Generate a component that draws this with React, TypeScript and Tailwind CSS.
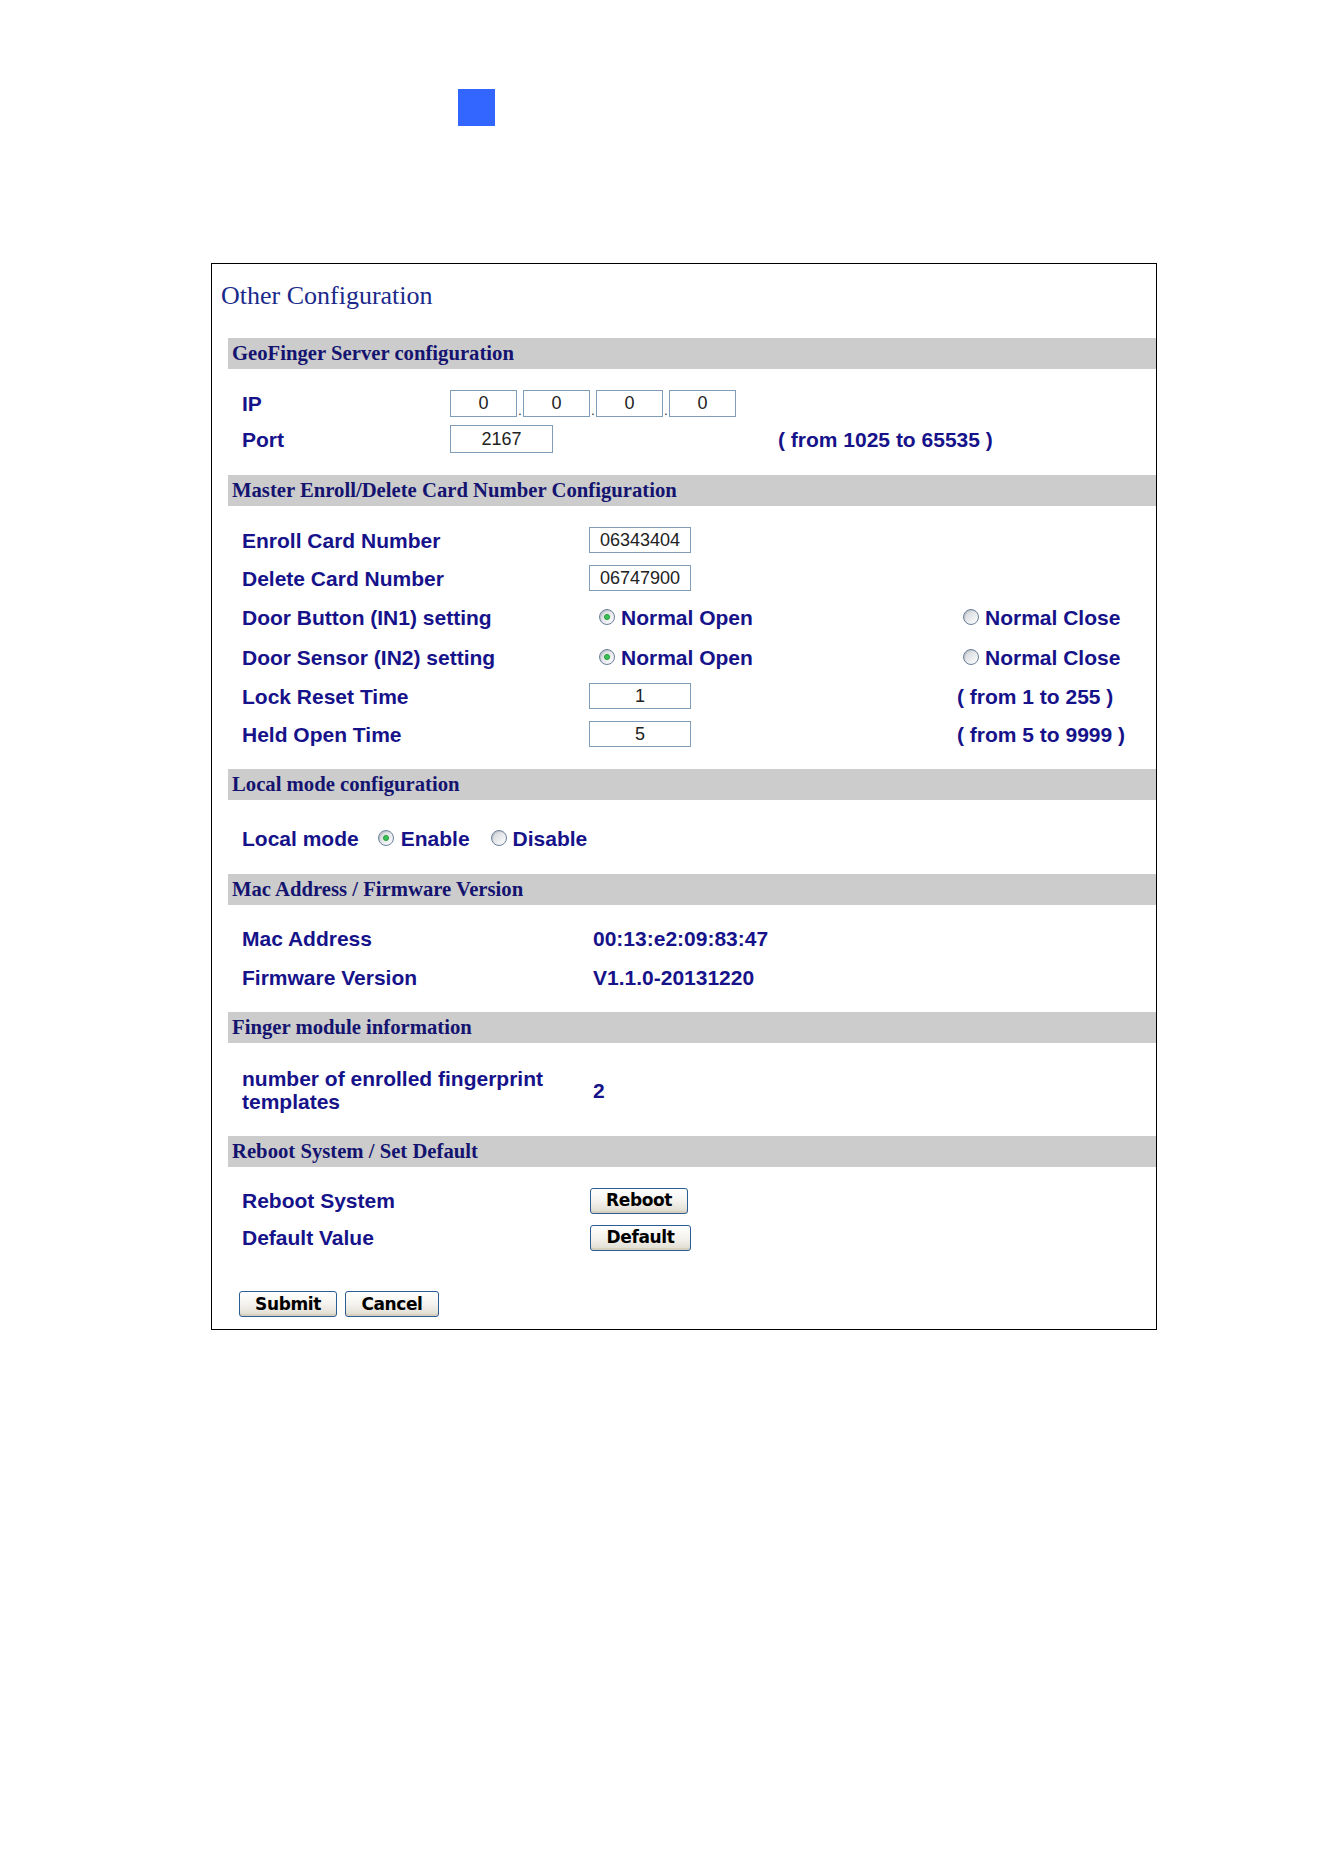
import type { ReactNode } from 'react'

const sans = "font-['Liberation_Sans',Arial,sans-serif]"
const label = "font-['Liberation_Sans',Arial,sans-serif] font-bold text-[21px] text-[#16128a] leading-none"

function SectionHeader({ title }: { title: string }) {
  return (
    <div className="h-[31px] bg-[#cccccc] flex items-center pl-[4px] font-['Liberation_Serif','Times_New_Roman',serif] font-bold text-[20.7px] text-[#141470] leading-none">
      {title}
    </div>
  )
}

function Field({ value, className }: { value: string; className: string }) {
  return (
    <input
      readOnly
      value={value}
      className={`${className} border border-[#7f9db9] bg-white text-center text-[18px] text-[#222] outline-none ${sans}`}
    />
  )
}

function Radio({ checked = false }: { checked?: boolean }) {
  return (
    <span className="inline-flex w-[16px] h-[16px] shrink-0 rounded-full border border-[#6b7f9c] bg-linear-to-br from-[#cfd3d8] to-[#ffffff] items-center justify-center shadow-[inset_1px_1px_1px_rgba(0,0,0,0.12)]">
      {checked && <span className="w-[6px] h-[6px] rounded-full bg-[#3cc257] border border-[#1f9a36]" />}
    </span>
  )
}

function Btn({ children, className }: { children: ReactNode; className: string }) {
  return (
    <button
      className={`${className} rounded-[3px] border border-[#2b5c94] bg-linear-to-b from-[#ffffff] via-[#f4f3ee] to-[#dedbcf] font-['DejaVu_Sans',Verdana,sans-serif] font-bold text-[17px] tracking-[-0.4px] text-black leading-none shadow-[inset_0_-2px_0_#d6d0bd]`}
    >
      {children}
    </button>
  )
}

export default function App() {
  return (
    <div className="bg-white min-h-[1872px] w-[1324px]">
      <div className="pt-[89px] pl-[458px]">
        <div className="w-[37px] h-[37px] bg-[#3366ff]" />
      </div>

      <div className="ml-[211px] mt-[137px] w-[946px] h-[1067px] border border-black pl-[16px]">
        <div className="pt-[15px] -ml-[7px] font-['Liberation_Serif','Times_New_Roman',serif] text-[26px] text-[#1a2a8a] leading-[34px]">
          Other Configuration
        </div>

        <div className="mt-[25px]">
          {/* GeoFinger server */}
          <SectionHeader title="GeoFinger Server configuration" />
          <div className="pl-[14px] pt-[16px] pb-[18px]">
            <div className="flex items-center h-[36px]">
              <div className={`${label} w-[208px]`}>IP</div>
              <div className="flex items-end">
                <Field value="0" className="w-[67px] h-[27px]" />
                <span className={`w-[6px] text-[12px] leading-none text-center text-black ${sans}`}>.</span>
                <Field value="0" className="w-[67px] h-[27px]" />
                <span className={`w-[6px] text-[12px] leading-none text-center text-black ${sans}`}>.</span>
                <Field value="0" className="w-[67px] h-[27px]" />
                <span className={`w-[6px] text-[12px] leading-none text-center text-black ${sans}`}>.</span>
                <Field value="0" className="w-[67px] h-[27px]" />
              </div>
            </div>
            <div className="flex items-center h-[36px]">
              <div className={`${label} w-[208px]`}>Port</div>
              <Field value="2167" className="w-[103px] h-[28px]" />
              <div className={`${label} ml-[225px]`}>( from 1025 to 65535 )</div>
            </div>
          </div>

          {/* Master card */}
          <SectionHeader title="Master Enroll/Delete Card Number Configuration" />
          <div className="pl-[14px] pt-[15px] pb-[16px]">
            <div className="flex items-center h-[38px]">
              <div className={`${label} w-[347px]`}>Enroll Card Number</div>
              <Field value="06343404" className="w-[102px] h-[26px]" />
            </div>
            <div className="flex items-center h-[38px]">
              <div className={`${label} w-[347px]`}>Delete Card Number</div>
              <Field value="06747900" className="w-[102px] h-[26px]" />
            </div>
            <div className="flex items-center h-[40px]">
              <div className={`${label} w-[347px]`}>Door Button (IN1) setting</div>
              <div className="w-[368px] flex items-center pl-[10px] gap-[6px]">
                <Radio checked />
                <span className={label}>Normal Open</span>
              </div>
              <div className="flex items-center pl-[6px] gap-[6px]">
                <Radio />
                <span className={label}>Normal Close</span>
              </div>
            </div>
            <div className="flex items-center h-[40px]">
              <div className={`${label} w-[347px]`}>Door Sensor (IN2) setting</div>
              <div className="w-[368px] flex items-center pl-[10px] gap-[6px]">
                <Radio checked />
                <span className={label}>Normal Open</span>
              </div>
              <div className="flex items-center pl-[6px] gap-[6px]">
                <Radio />
                <span className={label}>Normal Close</span>
              </div>
            </div>
            <div className="flex items-center h-[38px]">
              <div className={`${label} w-[347px]`}>Lock Reset Time</div>
              <div className="w-[368px]">
                <Field value="1" className="w-[102px] h-[26px]" />
              </div>
              <div className={label}>( from 1 to 255 )</div>
            </div>
            <div className="flex items-center h-[38px]">
              <div className={`${label} w-[347px]`}>Held Open Time</div>
              <div className="w-[368px]">
                <Field value="5" className="w-[102px] h-[26px]" />
              </div>
              <div className={label}>( from 5 to 9999 )</div>
            </div>
          </div>

          {/* Local mode */}
          <SectionHeader title="Local mode configuration" />
          <div className="pl-[14px] pt-[19px] pb-[17px]">
            <div className="flex items-center h-[38px]">
              <span className={label}>Local mode</span>
              <span className="ml-[19px] flex items-center gap-[7px]">
                <Radio checked />
                <span className={label}>Enable</span>
              </span>
              <span className="ml-[21px] flex items-center gap-[6px]">
                <Radio />
                <span className={label}>Disable</span>
              </span>
            </div>
          </div>

          {/* Mac / firmware */}
          <SectionHeader title="Mac Address / Firmware Version" />
          <div className="pl-[14px] pt-[14px] pb-[15px]">
            <div className="flex items-center h-[39px]">
              <div className={`${label} w-[351px]`}>Mac Address</div>
              <div className={label}>00:13:e2:09:83:47</div>
            </div>
            <div className="flex items-center h-[39px]">
              <div className={`${label} w-[351px]`}>Firmware Version</div>
              <div className={label}>V1.1.0-20131220</div>
            </div>
          </div>

          {/* Finger module */}
          <SectionHeader title="Finger module information" />
          <div className="pl-[14px] pt-[24px] pb-[23px]">
            <div className="flex items-center h-[46px]">
              <div className={`${label} w-[351px] !leading-[23px] pr-[12px]`}>number of enrolled fingerprint templates</div>
              <div className={label}>2</div>
            </div>
          </div>

          {/* Reboot */}
          <SectionHeader title="Reboot System / Set Default" />
          <div className="pl-[14px] pt-[15px]">
            <div className="flex items-center h-[37px]">
              <div className={`${label} w-[348px]`}>Reboot System</div>
              <Btn className="w-[98px] h-[26px]">Reboot</Btn>
            </div>
            <div className="flex items-center h-[37px]">
              <div className={`${label} w-[348px]`}>Default Value</div>
              <Btn className="w-[101px] h-[26px]">Default</Btn>
            </div>
          </div>
          <div className="flex gap-[8px] pl-[11px] mt-[35px]">
            <Btn className="w-[98px] h-[26px]">Submit</Btn>
            <Btn className="w-[94px] h-[26px]">Cancel</Btn>
          </div>
        </div>
      </div>
    </div>
  )
}
